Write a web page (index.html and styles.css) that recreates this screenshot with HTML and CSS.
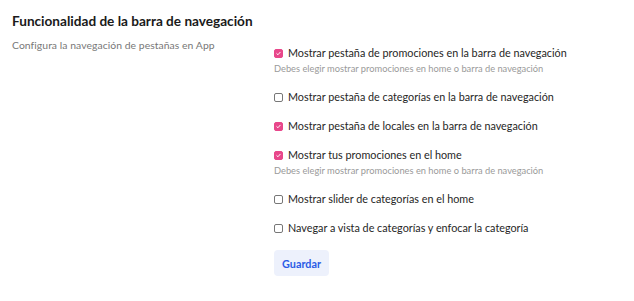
FILE: index.html
```html
<!DOCTYPE html>
<html lang="es">
<head>
<meta charset="utf-8">
<link rel="stylesheet" href="styles.css">
</head>
<body>
<section class="settings">
  <div class="intro">
    <h2 class="title">Funcionalidad de la barra de navegación</h2>
    <p class="subtitle">Configura la navegación de pestañas en App</p>
  </div>
  <div class="options">
    <div class="option">
      <label class="check"><span class="box on"><svg viewBox="0 0 10 10"><path d="M2.6 5.2l1.6 1.6 3.2-3.6" fill="none" stroke="#fff" stroke-width="1.4" stroke-linecap="round" stroke-linejoin="round"/></svg></span>Mostrar pestaña de promociones en la barra de navegación</label>
      <p class="hint">Debes elegir mostrar promociones en home o barra de navegación</p>
    </div>
    <div class="option">
      <label class="check"><span class="box"></span>Mostrar pestaña de categorías en la barra de navegación</label>
    </div>
    <div class="option">
      <label class="check"><span class="box on"><svg viewBox="0 0 10 10"><path d="M2.6 5.2l1.6 1.6 3.2-3.6" fill="none" stroke="#fff" stroke-width="1.4" stroke-linecap="round" stroke-linejoin="round"/></svg></span>Mostrar pestaña de locales en la barra de navegación</label>
    </div>
    <div class="option">
      <label class="check"><span class="box on"><svg viewBox="0 0 10 10"><path d="M2.6 5.2l1.6 1.6 3.2-3.6" fill="none" stroke="#fff" stroke-width="1.4" stroke-linecap="round" stroke-linejoin="round"/></svg></span>Mostrar tus promociones en el home</label>
      <p class="hint">Debes elegir mostrar promociones en home o barra de navegación</p>
    </div>
    <div class="option">
      <label class="check"><span class="box"></span>Mostrar slider de categorías en el home</label>
    </div>
    <div class="option">
      <label class="check"><span class="box"></span>Navegar a vista de categorías y enfocar la categoría</label>
    </div>
    <div class="actions">
      <button class="save" type="button">Guardar</button>
    </div>
  </div>
</section>
</body>
</html>
```
FILE: styles.css
```css
* { box-sizing: border-box; }
html, body { margin: 0; background: #fff; }
body { font-family: "Lato", "Open Sans", sans-serif; color: #222; }
.settings {
  display: grid;
  grid-template-columns: 262px 1fr;
  padding: 13px 12px;
}
.title { margin: 0; font-size: 13.6px; font-weight: 700; color: #1a1a1a; line-height: 17px; }
.subtitle { margin: 8px 0 0; font-size: 10.4px; color: #777; line-height: 14px; letter-spacing: 0.05px; }
.options { display: flex; flex-direction: column; padding-top: 33px; }
.option { display: flex; flex-direction: column; margin-bottom: 15px; }
.check { display: flex; align-items: center; gap: 5px; font-size: 10.8px; color: #262626; line-height: 14px; }
.box {
  width: 9px; height: 9px; border: 1px solid #777; border-radius: 2px; background: #fff;
  display: inline-flex; flex: none;
}
.box.on { background: #e8478b; border-color: #e8478b; }
.box svg { width: 100%; height: 100%; }
.hint { margin: 3px 0 0; font-size: 9.3px; color: #9a9a9a; line-height: 12px; }
.actions { padding-top: 0; }
.save {
  font-family: inherit; font-size: 10.8px; font-weight: 700; color: #2b5ce6;
  background: #edf1fc; border: none; border-radius: 4px;
  width: 55px; height: 26px; padding: 0;
}
```
